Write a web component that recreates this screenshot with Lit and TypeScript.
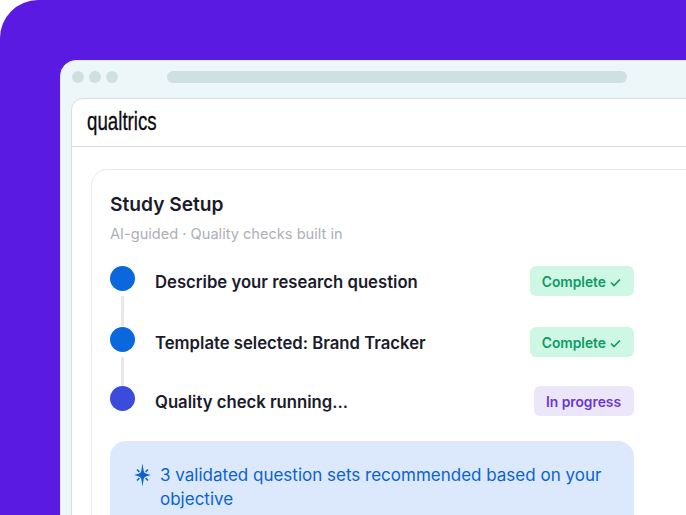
import { LitElement, html, css, svg } from "lit";
import { customElement } from "lit/decorators.js";

const steps = [
  { label: "Describe your research question", status: "Complete", done: true },
  { label: "Template selected: Brand Tracker", status: "Complete", done: true },
  { label: "Quality check running...", status: "In progress", done: false },
];

const check = svg`<path d="M1 5.5 L4 8.5 L10 2.5" fill="none" stroke="currentColor" stroke-width="1.7" />`;

@customElement("app-root")
export class AppRoot extends LitElement {
  static styles = css`
    :host {
      display: block;
      width: 686px;
      height: 515px;
      overflow: hidden;
      background: #fff;
      font-family: "Inter", sans-serif;
    }
    .panel {
      box-sizing: border-box;
      width: 686px;
      height: 515px;
      padding: 60px 0 0 60px;
      background: #5b1ae2;
      border-top-left-radius: 38px;
      overflow: hidden;
    }
    .window {
      box-sizing: border-box;
      width: 800px;
      height: 600px;
      padding: 10px 0 0 10px;
      background: #edf6f9;
      border: 1px solid #dfe7ea;
      border-radius: 16px 0 0 0;
    }
    .chrome {
      display: flex;
      align-items: center;
      height: 12px;
      margin-bottom: 15px;
      padding-left: 1px;
    }
    .light {
      width: 12px;
      height: 12px;
      border-radius: 50%;
      background: #d0e0e1;
      margin-right: 5px;
    }
    .url {
      width: 460px;
      height: 12px;
      margin-left: 44px;
      border-radius: 6px;
      background: #cfe0e2;
    }
    .page {
      height: 560px;
      background: #fff;
      border: 1px solid #d9dde0;
      border-radius: 12px 0 0 0;
    }
    .top {
      display: flex;
      align-items: center;
      box-sizing: border-box;
      height: 48px;
      padding: 0 0 2px 15px;
      border-bottom: 1px solid #d6dadd;
    }
    .logo {
      display: inline-block;
      font-family: "Liberation Sans", sans-serif;
      font-size: 26px;
      color: #0b0b0f;
      -webkit-text-stroke: 0.3px #0b0b0f;
      transform: scaleX(0.72);
      transform-origin: left center;
    }
    .body {
      padding: 22px 0 0 19px;
    }
    .card {
      box-sizing: border-box;
      width: 700px;
      height: 500px;
      padding: 22px 0 0 18px;
      border: 1px solid #e9eaee;
      border-radius: 16px 0 0 0;
    }
    h2 {
      margin: 0;
      font-size: 19.2px;
      line-height: 24px;
      font-weight: 600;
      color: #1b1b2b;
    }
    .sub {
      margin: 8px 0 22px;
      font-size: 14.6px;
      line-height: 20px;
      color: #adb0b5;
    }
    .steps {
      width: 524px;
    }
    .row {
      display: flex;
      padding-bottom: 31px;
    }
    .row:nth-child(2) {
      padding-bottom: 29px;
    }
    .row:last-child {
      padding-bottom: 25px;
    }
    .track {
      display: flex;
      flex-direction: column;
      align-items: center;
      width: 25px;
      margin-right: 20px;
    }
    .dot {
      flex: none;
      width: 25px;
      height: 25px;
      border-radius: 50%;
      background: #0a68dc;
    }
    .dot.active {
      background: #3b4bdc;
    }
    .line {
      flex: 1;
      width: 3px;
      margin-top: 5px;
      margin-bottom: -30px;
      background: #e6e8ec;
    }
    .label {
      flex: 1;
      height: 30px;
      font-size: 16.7px;
      line-height: 32px;
      font-weight: 600;
      color: #1b1b2b;
    }
    .badge {
      display: flex;
      align-items: center;
      gap: 4px;
      box-sizing: border-box;
      height: 30px;
      padding: 2px 13px 0 12px;
      border-radius: 6px;
      font-size: 13.8px;
      font-weight: 600;
      color: #0e9a68;
      background: #cef8e4;
    }
    .badge.busy {
      color: #6b37cf;
      background: #ece6fb;
    }
    .badge svg {
      width: 11px;
      height: 11px;
    }
    .note {
      display: flex;
      gap: 9px;
      box-sizing: border-box;
      width: 524px;
      height: 120px;
      padding: 22px 20px 0 24px;
      border-radius: 16px;
      background: #dce8fb;
      font-size: 17px;
      line-height: 24px;
      color: #0b63ce;
    }
    .note svg {
      flex: none;
      width: 17px;
      height: 24px;
    }
  `;

  render() {
    return html`
      <div class="panel">
        <div class="window">
          <div class="chrome">
            <span class="light"></span><span class="light"></span><span class="light"></span>
            <span class="url"></span>
          </div>
          <div class="page">
            <div class="top"><span class="logo">qualtrics</span></div>
            <div class="body">
              <div class="card">
                <h2>Study Setup</h2>
                <p class="sub">AI-guided · Quality checks built in</p>
                <div class="steps">
                  ${steps.map(
                    (s, i) => html`
                      <div class="row">
                        <div class="track">
                          <span class="dot ${s.done ? "" : "active"}"></span>
                          ${i < steps.length - 1 ? html`<span class="line"></span>` : ""}
                        </div>
                        <div class="label">${s.label}</div>
                        <div class="badge ${s.done ? "" : "busy"}">
                          ${s.status}
                          ${s.done ? html`<svg viewBox="0 0 11 11">${check}</svg>` : ""}
                        </div>
                      </div>
                    `
                  )}
                </div>
                <div class="note">
                  <svg viewBox="0 0 17 24" fill="#0b63ce">
                    <path d="M8.5 0.5 L9.6 7.5 C10 9.3 10.9 10.3 12.5 10.8 L16.8 12 L12.5 13.2 C10.9 13.7 10 14.7 9.6 16.5 L8.5 23.5 L7.4 16.5 C7 14.7 6.1 13.7 4.5 13.2 L0.2 12 L4.5 10.8 C6.1 10.3 7 9.3 7.4 7.5 Z" />
                    <path d="M3 6.5 L5.4 8.9 M14 6.5 L11.6 8.9 M3 17.5 L5.4 15.1 M14 17.5 L11.6 15.1" stroke="#0b63ce" stroke-width="1.5" />
                  </svg>
                  <span>3 validated question sets recommended based on your objective</span>
                </div>
              </div>
            </div>
          </div>
        </div>
      </div>
    `;
  }
}
